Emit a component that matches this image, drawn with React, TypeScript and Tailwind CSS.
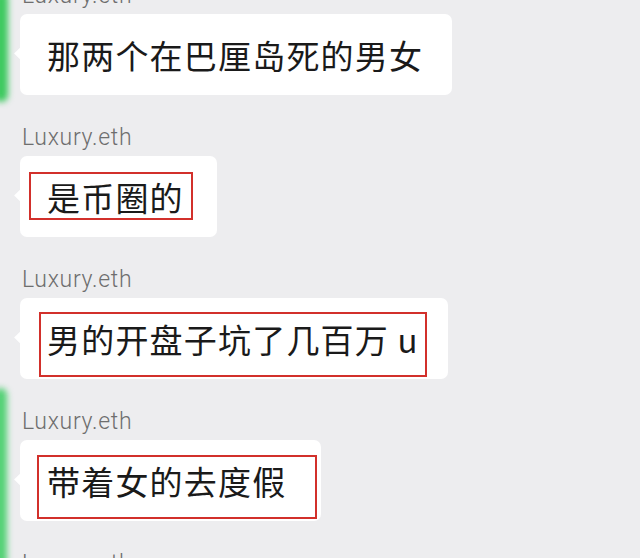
import React from 'react';

type Box = { left: number; top: number; width: number; height: number };

type Msg = { text: string; width: number; box?: Box };

const messages: Msg[] = [
  { text: '那两个在巴厘岛死的男女', width: 432 },
  { text: '是币圈的', width: 197, box: { left: 9, top: 16, width: 164, height: 48 } },
  { text: '男的开盘子坑了几百万 u', width: 428, box: { left: 19, top: 14, width: 388, height: 65 } },
  { text: '带着女的去度假', width: 301, box: { left: 17, top: 15, width: 280, height: 64 } },
];

const Name: React.FC = () => (
  <div className="h-[28px] pl-[22px] text-[23px] leading-[28px] tracking-[0.7px] font-light text-[#6e6e6e] font-['Roboto','Noto_Sans',sans-serif]">
    Luxury.eth
  </div>
);

const Bubble: React.FC<{ msg: Msg }> = ({ msg }) => (
  <div
    className="relative mt-[4px] ml-[20px] h-[81px] rounded-[7px] bg-white"
    style={{ width: msg.width }}
  >
    {/* tail */}
    <div className="absolute left-[-4px] top-[35px] h-[9px] w-[9px] rotate-45 bg-white" />
    <div className="relative pl-[27px] pt-[20px] text-[33px] leading-[42px] tracking-[1.2px] text-[#1a1a1a] whitespace-nowrap font-['Noto_Sans_CJK_SC','Noto_Sans',sans-serif]">
      {msg.text}
    </div>
    {msg.box && (
      <div
        className="absolute border-2 border-[#d2302b]"
        style={{ left: msg.box.left, top: msg.box.top, width: msg.box.width, height: msg.box.height }}
      />
    )}
  </div>
);

export default function App() {
  return (
    <div className="relative h-[558px] w-[640px] overflow-hidden bg-[#ededef]">
      {/* blurred green strip on the left edge */}
      <div className="absolute left-[-6px] top-[-10px] h-[112px] w-[14px] rounded-full bg-[#3cc95e] blur-[3px]" />
      <div className="absolute left-[-6px] top-[388px] h-[190px] w-[13px] rounded-full bg-[#52d174] blur-[3px]" />

      <div className="relative flex flex-col gap-[29px] -mt-[18px]">
        {messages.map((m, i) => (
          <div key={i} className="flex flex-col">
            <Name />
            <Bubble msg={m} />
          </div>
        ))}
        <Name />
      </div>
    </div>
  );
}
